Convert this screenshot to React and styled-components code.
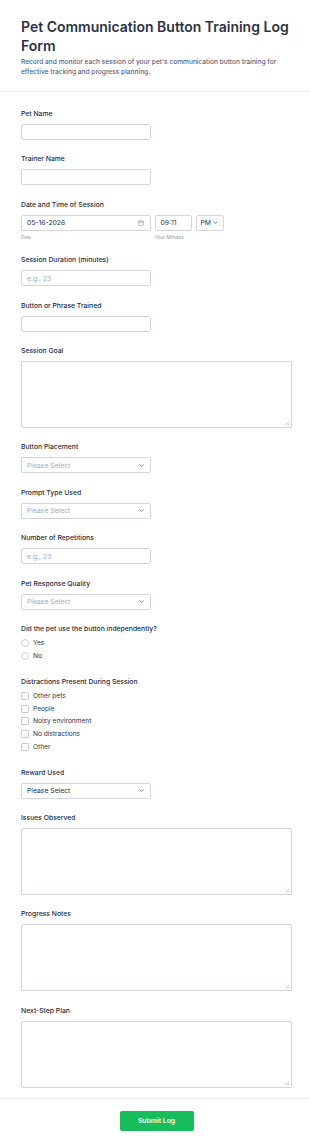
import React from 'react';
import styled, { createGlobalStyle } from 'styled-components';

const GlobalStyle = createGlobalStyle`
	body {
		margin: 0;
		background: #fff;
		font-family: Inter, "Noto Sans", "Liberation Sans", sans-serif;
		color: #2c3345;
	}
	* {
		box-sizing: border-box;
	}
`;

const Page = styled.div`
	width: 310px;
	background: #fff;
`;

const Header = styled.header`
	padding: 17px 18px 14px 21px;
	border-bottom: 1px solid #ecedf2;
`;

const Title = styled.h1`
	margin: 0;
	font-size: 14px;
	line-height: 19px;
	font-weight: 600;
	color: #2c3345;
`;

const Description = styled.p`
	margin: 2px 0 0;
	font-size: 6.6px;
	line-height: 10px;
	font-weight: 500;
	color: #57647e;
`;

const Body = styled.form`
	display: flex;
	flex-direction: column;
	gap: 14.4px;
	padding: 17px 18px 10px 21px;
`;

const Field = styled.div`
	display: flex;
	flex-direction: column;
`;

const Label = styled.label`
	font-size: 6.8px;
	line-height: 10px;
	font-weight: 500;
	color: #252b3b;
	margin-bottom: ${p => (p.$tight ? '3px' : '5px')};
`;

const Box = styled.div`
	display: flex;
	align-items: center;
	justify-content: space-between;
	width: ${p => p.$width || '130px'};
	height: 16px;
	padding: ${p => p.$pad || '0 6px 0 5px'};
	border: 1px solid #d3d6df;
	border-radius: 2px;
	background: #fff;
	font-size: 6.8px;
	color: ${p => (p.$muted ? '#a4abbb' : '#2c3345')};
`;

const TextInput = styled.input`
	width: 130px;
	height: 16px;
	padding: 0 5px;
	border: 1px solid #d3d6df;
	border-radius: 2px;
	font-family: inherit;
	font-size: 6.8px;
	color: #2c3345;
	outline: none;

	&::placeholder {
		color: #a4abbb;
	}
`;

const AreaWrap = styled.div`
	position: relative;
	width: 271px;

	&::after {
		content: '';
		position: absolute;
		right: 3px;
		bottom: 3px;
		width: 3px;
		height: 3px;
		background: linear-gradient(135deg, transparent 45%, #c4c8d2 45%, #c4c8d2 60%, transparent 60%, transparent 75%, #c4c8d2 75%);
	}
`;

const TextArea = styled.textarea`
	display: block;
	width: 271px;
	height: 67px;
	margin: 0;
	border: 1px solid #d3d6df;
	border-radius: 2px;
	font-family: inherit;
	outline: none;
	resize: none;
`;

const DateRow = styled.div`
	display: flex;
	gap: 3.5px;
`;

const DateCol = styled.div`
	display: flex;
	flex-direction: column;
`;

const Sub = styled.span`
	margin-top: 3px;
	font-size: 4.6px;
	line-height: 7px;
	color: #8d93a5;
`;

const ChoiceList = styled.div`
	display: flex;
	flex-direction: column;
`;

const Choice = styled.div`
	display: flex;
	align-items: center;
	gap: 4px;
	height: 12.7px;
	font-size: 6.6px;
	color: #2c3345;
`;

const Mark = styled.span`
	width: 8px;
	height: 8px;
	border: 1px solid #c9cdd7;
	border-radius: ${p => (p.$round ? '50%' : '1px')};
	background: #fff;
`;

const Footer = styled.footer`
	display: flex;
	justify-content: center;
	padding: 12px 0 16px 3px;
	border-top: 1px solid #f0f1f5;
`;

const SubmitButton = styled.button`
	width: 74px;
	height: 20px;
	border: none;
	border-radius: 2px;
	background: #18bd5b;
	color: #fff;
	font-family: inherit;
	font-size: 6.8px;
	font-weight: 600;
`;

const Chevron = () => (
	<svg width="5" height="3" viewBox="0 0 5 3">
		<path d="M0.6 0.6 L2.5 2.3 L4.4 0.6" fill="none" stroke="#57647e" strokeWidth="0.8" />
	</svg>
);

const CalendarIcon = () => (
	<svg width="6" height="6" viewBox="0 0 6 6">
		<rect x="0.6" y="1" width="4.8" height="4.4" rx="0.6" fill="none" stroke="#8d93a5" strokeWidth="0.6" />
		<path d="M0.6 2.4 H5.4 M2 0.4 V1.6 M4 0.4 V1.6" stroke="#8d93a5" strokeWidth="0.6" />
	</svg>
);

const Select = ({ value, muted = true }) => (
	<Box $muted={muted}>
		<span>{value}</span>
		<Chevron />
	</Box>
);

const Area = () => (
	<AreaWrap>
		<TextArea />
	</AreaWrap>
);

const distractions = ['Other pets', 'People', 'Noisy environment', 'No distractions', 'Other'];

export default function App() {
	return (
		<Page>
			<GlobalStyle />
			<Header>
				<Title>Pet Communication Button Training Log Form</Title>
				<Description>
					Record and monitor each session of your pet's communication button training for effective tracking and progress planning.
				</Description>
			</Header>

			<Body>
				<Field>
					<Label>Pet Name</Label>
					<TextInput />
				</Field>
				<Field>
					<Label>Trainer Name</Label>
					<TextInput />
				</Field>
				<Field>
					<Label>Date and Time of Session</Label>
					<DateRow>
						<DateCol>
							<Box>
								<span>05-16-2026</span>
								<CalendarIcon />
							</Box>
							<Sub>Date</Sub>
						</DateCol>
						<DateCol>
							<Box $width="37.5px">
								<span>09:11</span>
							</Box>
							<Sub>Hour Minutes</Sub>
						</DateCol>
						<DateCol>
							<Box $width="28px" $pad="0 5px 0 4px">
								<span>PM</span>
								<Chevron />
							</Box>
						</DateCol>
					</DateRow>
				</Field>
				<Field>
					<Label>Session Duration (minutes)</Label>
					<TextInput placeholder="e.g., 23" />
				</Field>
				<Field>
					<Label>Button or Phrase Trained</Label>
					<TextInput />
				</Field>
				<Field>
					<Label>Session Goal</Label>
					<Area />
				</Field>
				<Field>
					<Label>Button Placement</Label>
					<Select value="Please Select" />
				</Field>
				<Field>
					<Label>Prompt Type Used</Label>
					<Select value="Please Select" />
				</Field>
				<Field>
					<Label>Number of Repetitions</Label>
					<TextInput placeholder="e.g., 23" />
				</Field>
				<Field>
					<Label>Pet Response Quality</Label>
					<Select value="Please Select" />
				</Field>
				<Field>
					<Label $tight>Did the pet use the button independently?</Label>
					<ChoiceList>
						{['Yes', 'No'].map(opt => (
							<Choice key={opt}>
								<Mark $round />
								{opt}
							</Choice>
						))}
					</ChoiceList>
				</Field>
				<Field>
					<Label $tight>Distractions Present During Session</Label>
					<ChoiceList>
						{distractions.map(opt => (
							<Choice key={opt}>
								<Mark />
								{opt}
							</Choice>
						))}
					</ChoiceList>
				</Field>
				<Field>
					<Label>Reward Used</Label>
					<Select value="Please Select" muted={false} />
				</Field>
				<Field>
					<Label>Issues Observed</Label>
					<Area />
				</Field>
				<Field>
					<Label>Progress Notes</Label>
					<Area />
				</Field>
				<Field>
					<Label>Next-Step Plan</Label>
					<Area />
				</Field>
			</Body>

			<Footer>
				<SubmitButton type="button">Submit Log</SubmitButton>
			</Footer>
		</Page>
	);
}
